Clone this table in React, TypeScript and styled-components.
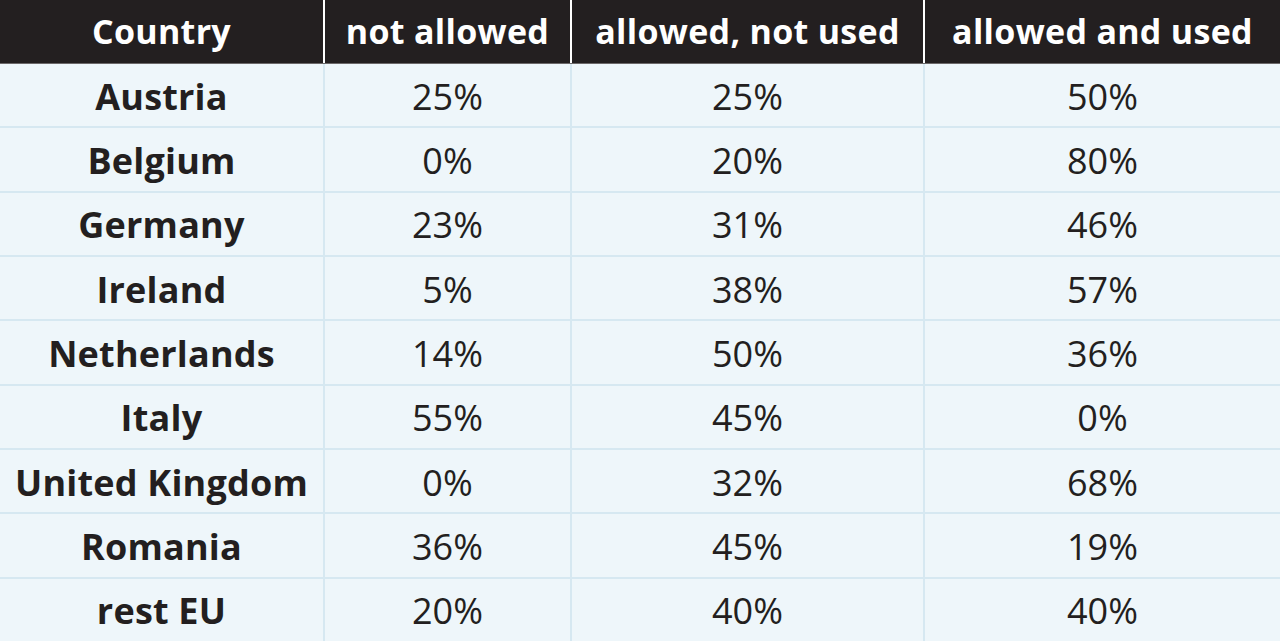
import React from 'react';
import styled, { createGlobalStyle } from 'styled-components';

const GlobalStyle = createGlobalStyle`
  html, body {
    margin: 0;
    padding: 0;
    background: #eef6fa;
  }
  body {
    font-family: "Open Sans", "Liberation Sans", sans-serif;
  }
`;

type Row = { country: string; values: [string, string, string] };

const rows: Row[] = [
  { country: 'Austria', values: ['25%', '25%', '50%'] },
  { country: 'Belgium', values: ['0%', '20%', '80%'] },
  { country: 'Germany', values: ['23%', '31%', '46%'] },
  { country: 'Ireland', values: ['5%', '38%', '57%'] },
  { country: 'Netherlands', values: ['14%', '50%', '36%'] },
  { country: 'Italy', values: ['55%', '45%', '0%'] },
  { country: 'United Kingdom', values: ['0%', '32%', '68%'] },
  { country: 'Romania', values: ['36%', '45%', '19%'] },
  { country: 'rest EU', values: ['20%', '40%', '40%'] },
];

const headers = ['Country', 'not allowed', 'allowed, not used', 'allowed and used'];

export default function App() {
  return (
    <>
      <GlobalStyle />
      <Table>
        <HeadRow>
          {headers.map((h) => (
            <HeadCell key={h}>{h}</HeadCell>
          ))}
        </HeadRow>
        {rows.map((r, i) => (
          <BodyRow key={r.country} last={i === rows.length - 1}>
            <CountryCell>{r.country}</CountryCell>
            {r.values.map((v, j) => (
              <ValueCell key={j}>{v}</ValueCell>
            ))}
          </BodyRow>
        ))}
      </Table>
    </>
  );
}

const Table = styled.div`
  width: 1280px;
  height: 641px;
  display: flex;
  flex-direction: column;
  background: #eef6fa;
  color: #231f20;
`;

const columns = '325px 247px 353px 1fr';

const HeadRow = styled.div`
  display: grid;
  grid-template-columns: ${columns};
  height: 64px;
  background: #231f20;
  border-bottom: 1px solid #6b6869;
  box-sizing: border-box;
`;

const HeadCell = styled.div`
  display: flex;
  align-items: center;
  justify-content: center;
  color: #ffffff;
  font-weight: 700;
  font-size: 34px;
  letter-spacing: 0.3px;
  padding-bottom: 2px;

  &:not(:last-child) {
    border-right: 2px solid #ffffff;
  }
`;

const BodyRow = styled.div<{ last: boolean }>`
  display: grid;
  grid-template-columns: ${columns};
  flex: 1;
  border-bottom: ${(p) => (p.last ? 'none' : '2px solid #d6e8f1')};
`;

const CellBase = styled.div`
  display: flex;
  align-items: center;
  justify-content: center;
  padding-top: 2px;

  &:not(:last-child) {
    border-right: 2px solid #d6e8f1;
  }
`;

const CountryCell = styled(CellBase)`
  font-weight: 700;
  font-size: 36px;
  letter-spacing: 0.2px;
`;

const ValueCell = styled(CellBase)`
  font-weight: 400;
  font-size: 36px;
`;
